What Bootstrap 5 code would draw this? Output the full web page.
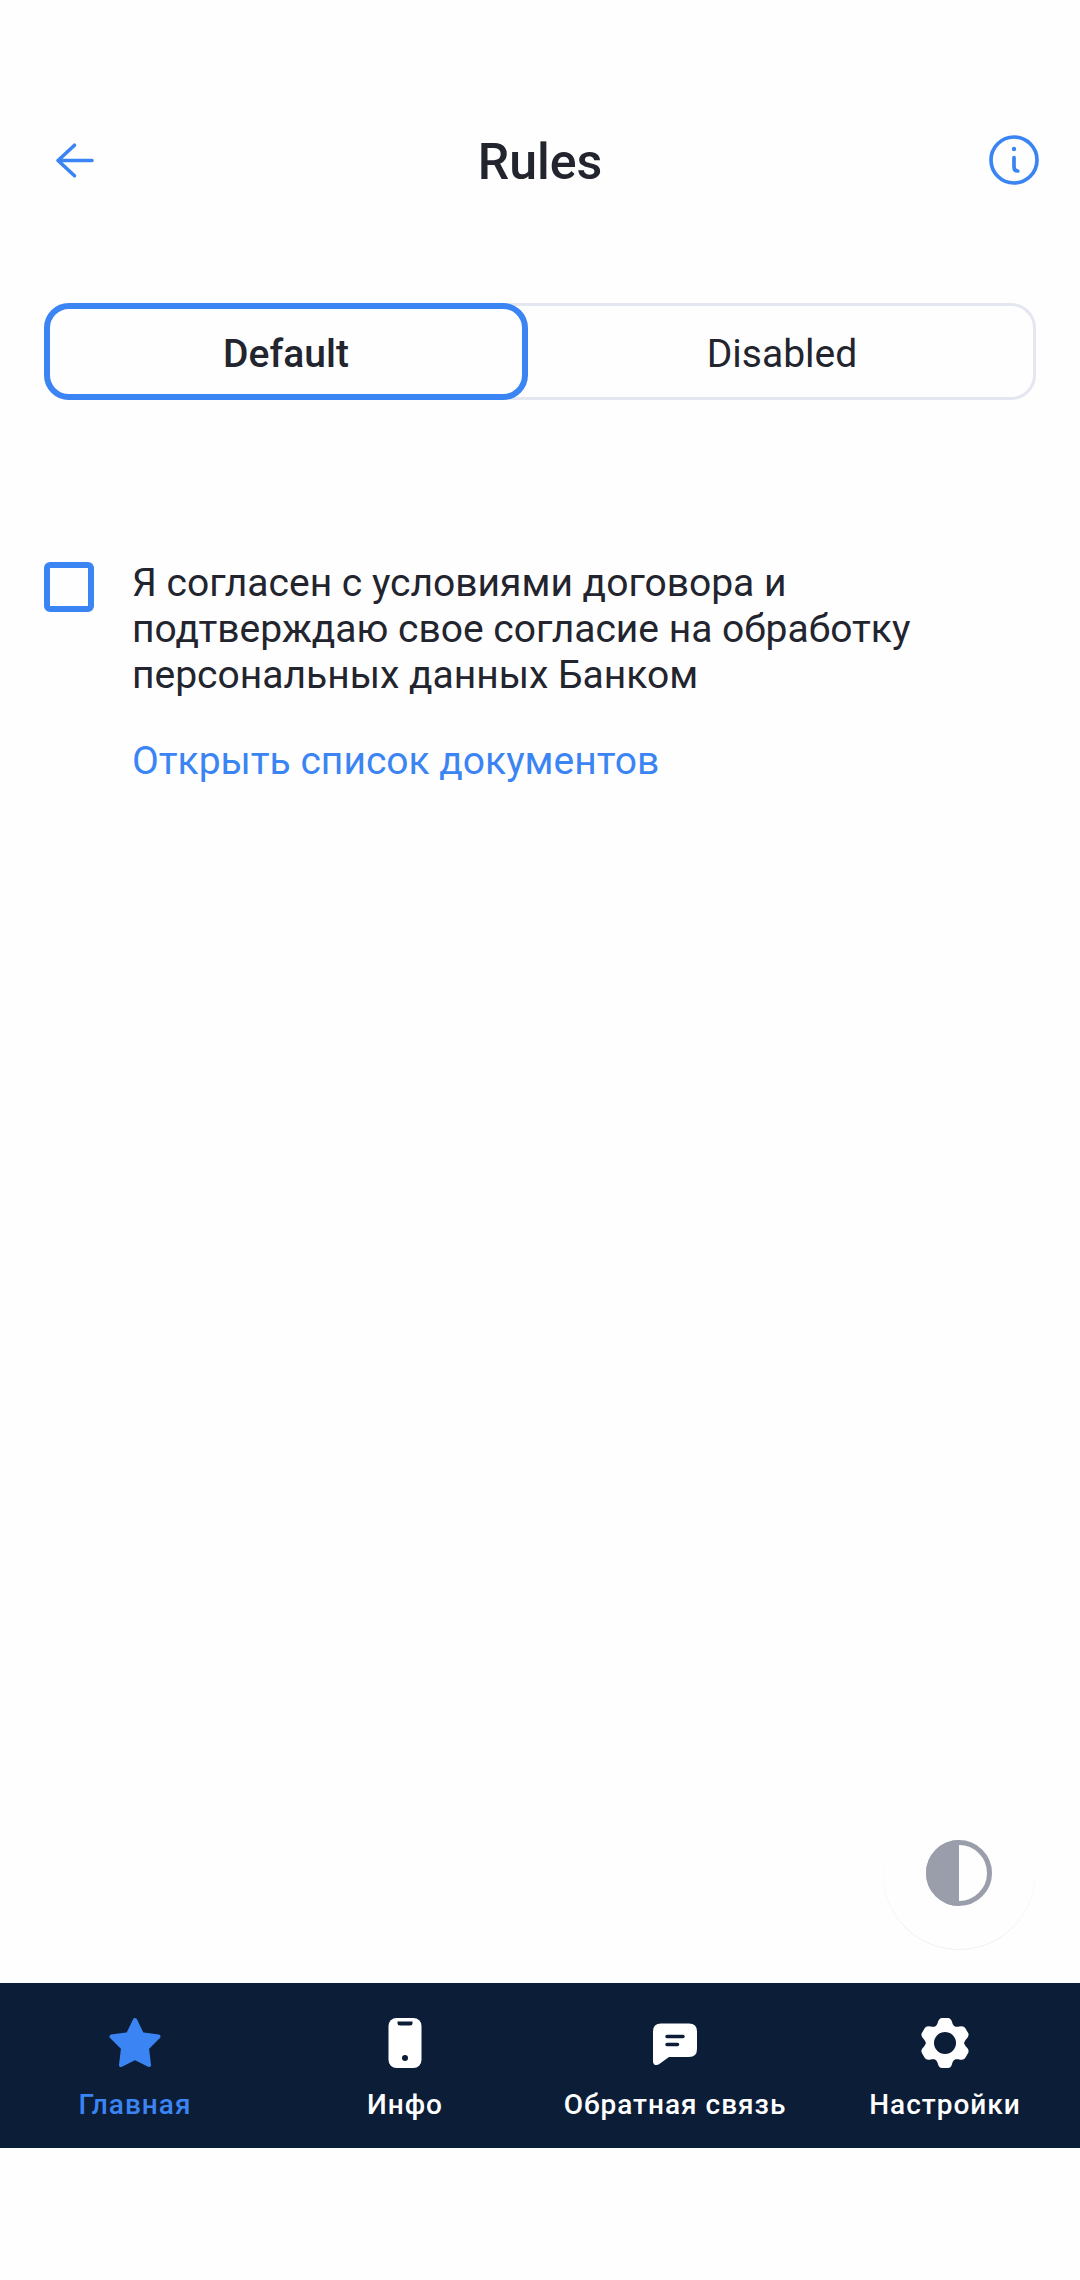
<!DOCTYPE html>
<html lang="ru">
<head>
<meta charset="utf-8">
<meta name="viewport" content="width=device-width, initial-scale=1">
<title>Rules</title>
<link href="https://cdn.jsdelivr.net/npm/bootstrap@5.3.0/dist/css/bootstrap.min.css" rel="stylesheet">
<style>
:root { --accent: #3b84f3; --ink: #22242e; --line: #e4e7ef; --bar: #0c1d37; }
body { font-family: Roboto, "Noto Sans", sans-serif; font-size: 39px; line-height: 46px; color: var(--ink); background: #fefefe; }
.screen-head { padding: 130px 36px 0; }
.screen-head h1 { font-size: 50px; line-height: 64px; font-weight: 500; margin: 0; }
.head-btn { width: 60px; height: 60px; color: var(--accent); }
.screen-body { padding: 109px 44px 33px; }
.switcher { border: 3px solid var(--line); border-radius: 25px; }
.switcher .btn { margin: -3px; height: 97px; border: 6px solid transparent; border-radius: 25px; font-size: 39px; line-height: 46px; padding: 22px 0 17px; color: var(--ink); }
.switcher .seg-first { flex: 0 0 calc(50% - 9px); }
.switcher .seg-last { flex: 1 1 0; margin-left: 3px; }
.switcher .btn-check:checked + .btn { border-color: var(--accent); background: transparent; color: var(--ink); font-weight: 500; }
.agreement { margin-top: 160px; gap: 38px; }
.agreement .form-check-input { width: 50px; height: 50px; margin: 2px 0 0; border: 6px solid var(--accent); border-radius: 6px; background-color: transparent; }
.agreement-text { max-width: 820px; }
.docs-link { margin-top: 40px; color: var(--accent); }
.theme-btn { width: 152px; height: 152px; margin: 0 1px 1px; background: #fefefe; box-shadow: 0 1px 1px rgba(0, 0, 0, .06); color: #9a9eaa; }
.tabs-bar { background: var(--bar); margin-bottom: 132px; }
.tabs-bar a { color: #fff; font-size: 28px; line-height: 34px; font-weight: 500; letter-spacing: 1px; padding: 33px 0 26px; gap: 18px; white-space: nowrap; }
.tabs-bar a.active { color: var(--accent); }
</style>
</head>
<body>
<div class="d-flex flex-column min-vh-100">
  <header class="screen-head d-flex align-items-start justify-content-between">
    <button type="button" class="btn head-btn p-0 border-0 d-flex" aria-label="Назад">
      <svg width="60" height="60" viewBox="0 0 60 60" fill="none" stroke="currentColor" stroke-width="3.6" stroke-linecap="round" stroke-linejoin="round"><path d="M56 30.500H22M38.500 15.200L22 30.500L38.500 45.800"/></svg>
    </button>
    <h1>Rules</h1>
    <button type="button" class="btn head-btn p-0 border-0 d-flex" aria-label="Информация">
      <svg width="60" height="60" viewBox="0 0 60 60" fill="none" stroke="currentColor" stroke-width="3.700" stroke-linecap="round"><circle cx="30" cy="30" r="23"/><path d="M30 27.500V37Q30 41 33.800 41"/><circle cx="30" cy="19" r="2.200" fill="currentColor" stroke="none"/></svg>
    </button>
  </header>

  <main class="screen-body d-flex flex-column flex-grow-1">
    <div class="switcher d-flex" role="group" aria-label="Rules">
      <input type="radio" class="btn-check" name="state" id="state-default" checked>
      <label class="btn seg-first" for="state-default">Default</label>
      <input type="radio" class="btn-check" name="state" id="state-disabled">
      <label class="btn seg-last" for="state-disabled">Disabled</label>
    </div>

    <div class="agreement d-flex align-items-start">
      <input class="form-check-input flex-shrink-0" type="checkbox" id="agree">
      <div class="agreement-text">
        <label class="d-block" for="agree">Я согласен с условиями договора и подтверждаю свое согласие на обработку персональных данных Банком</label>
        <a class="docs-link d-inline-block text-decoration-none" href="#">Открыть список документов</a>
      </div>
    </div>

    <button type="button" class="theme-btn btn rounded-circle border-0 p-0 mt-auto align-self-end d-flex align-items-center justify-content-center" aria-label="Тема">
      <svg width="66" height="66" viewBox="0 0 66 66"><circle cx="33" cy="33" r="30.500" fill="none" stroke="currentColor" stroke-width="5"/><path d="M33 0A33 33 0 0 0 33 66Z" fill="currentColor"/></svg>
    </button>
  </main>

  <nav class="tabs-bar row row-cols-4 g-0">
    <a href="#" class="active col d-flex flex-column align-items-center text-decoration-none" aria-current="page">
      <svg width="54" height="54" viewBox="0 0 54 54"><path fill="currentColor" stroke="currentColor" stroke-width="4" stroke-linejoin="round" d="M27 4L34 18.300L50.500 20.600L39 32.200L41 49L27 42L13 49L15 32.200L3.500 20.600L20 18.300Z"/></svg>
      <span>Главная</span>
    </a>
    <a href="#" class="col d-flex flex-column align-items-center text-decoration-none">
      <svg width="54" height="54" viewBox="0 0 54 54"><rect x="10.500" y="2" width="33" height="50" rx="8" fill="currentColor"/><path d="M19.500 5.500H34.500V7Q34.500 9.500 32 9.500H22Q19.500 9.500 19.500 7Z" fill="#0c1d37"/><circle cx="27" cy="42" r="3" fill="#0c1d37"/></svg>
      <span>Инфо</span>
    </a>
    <a href="#" class="col d-flex flex-column align-items-center text-decoration-none">
      <svg width="54" height="54" viewBox="0 0 54 54"><path fill="currentColor" d="M13 7.500H41Q49 7.500 49 15.500V33Q49 41 41 41H21L11 48.300C8.500 50 5 49 5 45.500V15.500Q5 7.500 13 7.500Z"/><path d="M19 20.500H35M19 28.500H29.500" stroke="#0c1d37" stroke-width="3.500" stroke-linecap="round"/></svg>
      <span>Обратная связь</span>
    </a>
    <a href="#" class="col d-flex flex-column align-items-center text-decoration-none">
      <svg width="54" height="54" viewBox="0 0 54 54"><defs><path id="tooth" d="M14 14C18 10 19 9 19.800 6.500Q21 2 24 2H30Q33 2 34.200 6.500C35 9 36 10 40 14L27 27Z"/></defs><g fill="currentColor"><circle cx="27" cy="27" r="19"/><use href="#tooth"/><use href="#tooth" transform="rotate(60 27 27)"/><use href="#tooth" transform="rotate(120 27 27)"/><use href="#tooth" transform="rotate(180 27 27)"/><use href="#tooth" transform="rotate(240 27 27)"/><use href="#tooth" transform="rotate(300 27 27)"/></g><circle cx="27" cy="27" r="11" fill="#0c1d37"/></svg>
      <span>Настройки</span>
    </a>
  </nav>
</div>
<script src="https://cdn.jsdelivr.net/npm/bootstrap@5.3.0/dist/js/bootstrap.bundle.min.js"></script>
</body>
</html>
